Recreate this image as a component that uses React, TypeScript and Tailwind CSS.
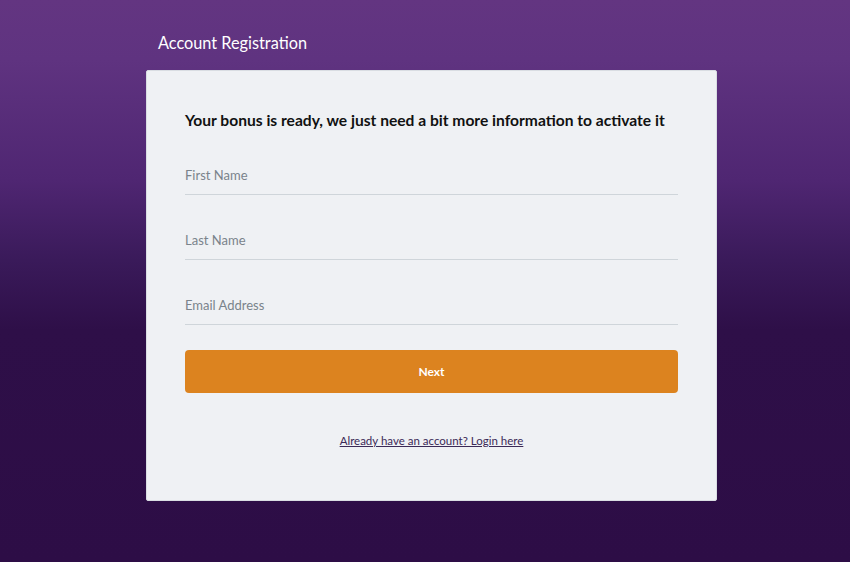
export default function App() {
  const fields = ['First Name', 'Last Name', 'Email Address'];

  return (
    <div
      className="h-[562px] w-full overflow-hidden bg-[linear-gradient(180deg,#633581_0px,#5f3380_60px,#4f2672_180px,#3a1a5a_260px,#2e0f48_330px,#2d0d46_562px)]"
      style={{ fontFamily: 'Lato, "Noto Sans", sans-serif' }}
    >
      <div className="ml-[146px] w-[571px] pt-[33px]">
        <div className="pl-3 text-[16.3px] leading-[20px] text-white">Account Registration</div>

        <div className="mt-[17px] h-[431px] rounded-[2px] border border-[#d9dde2] bg-[#eff1f4] px-[38px] pt-[39px]">
          <h1 className="text-[15.6px] font-bold leading-[20px] text-[#111111]">
            Your bonus is ready, we just need a bit more information to activate it
          </h1>

          {fields.map((label) => (
            <div key={label} className="mt-[35px] border-b border-[#cfd5da]">
              <input
                type="text"
                placeholder={label}
                className="block h-[29px] w-full bg-transparent pb-[10px] text-[13px] leading-[18px] text-[#333] outline-none placeholder:text-[#7a838b]"
              />
            </div>
          ))}

          <button
            type="button"
            className="mt-[25px] flex h-[43px] w-full items-center justify-center rounded-[4px] bg-[#dc831f] text-[12px] font-bold text-white"
          >
            Next
          </button>

          <div className="mt-[38px] text-center leading-[16px]">
            <a href="#" className="text-[11.5px] text-[#3b2a57] underline">
              Already have an account? Login here
            </a>
          </div>
        </div>
      </div>
    </div>
  );
}
